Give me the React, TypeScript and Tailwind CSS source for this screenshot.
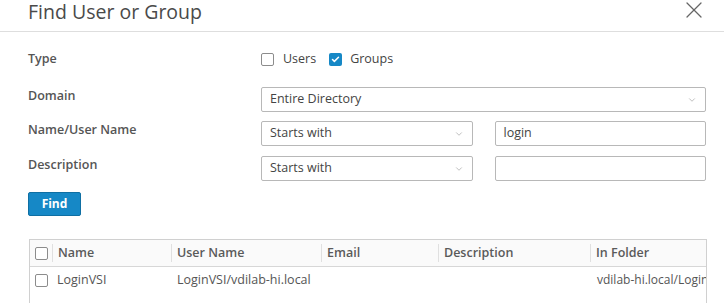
import { X, ChevronDown, Check } from 'lucide-react'

function Box({ checked = false }: { checked?: boolean }) {
  return checked ? (
    <span className="w-[13px] h-[13px] rounded-[2px] bg-[#1688c6] flex items-center justify-center">
      <Check className="w-[9px] h-[9px] text-white" strokeWidth={4} />
    </span>
  ) : (
    <span className="w-[13px] h-[13px] rounded-[2px] border border-[#8c8c8c] bg-white" />
  )
}

function Select({ value }: { value: string }) {
  return (
    <div className="h-[25px] border border-[#b8b8b8] rounded-[2px] flex items-center justify-between pl-[8px] pr-[8px] text-[#444]">
      <span>{value}</span>
      <ChevronDown className="w-[10px] h-[10px] text-[#999]" strokeWidth={1.5} />
    </div>
  )
}

export default function App() {
  const cols = [
    { label: 'Name', w: 'w-[119px]' },
    { label: 'User Name', w: 'w-[150px]' },
    { label: 'Email', w: 'w-[117px]' },
    { label: 'Description', w: 'w-[152px]' },
    { label: 'In Folder', w: 'w-[116px]' },
  ]

  return (
    <div className="w-[724px] h-[303px] bg-white overflow-hidden text-[12.5px] text-[#444]" style={{ fontFamily: '"Open Sans", sans-serif' }}>
      {/* Header */}
      <div className="h-[32px] border-b border-[#dedede] flex items-start justify-between pl-[28px] pr-[16px]">
        <h1 className="text-[19.5px] leading-[23px] text-[#4a4a4a] font-normal">Find User or Group</h1>
        <X className="w-[28px] h-[28px] mt-[-4px] text-[#666]" strokeWidth={1.1} />
      </div>

      <div className="pl-[28px] pr-[18px]">
        {/* Type */}
        <div className="mt-[15px] h-[25px] flex items-center">
          <div className="w-[233px] font-semibold text-[#555]">Type</div>
          <div className="flex items-center">
            <Box />
            <span className="ml-[9px]">Users</span>
            <span className="ml-[13px]"><Box checked /></span>
            <span className="ml-[8px]">Groups</span>
          </div>
        </div>

        {/* Domain */}
        <div className="mt-[15px] flex">
          <div className="w-[233px] leading-[18px] font-semibold text-[#555]">Domain</div>
          <div className="flex-1">
            <Select value="Entire Directory" />
          </div>
        </div>

        {/* Name */}
        <div className="mt-[9px] flex">
          <div className="w-[233px] leading-[18px] font-semibold text-[#555]">Name/User Name</div>
          <div className="flex-1 grid grid-cols-2 gap-[22px]">
            <Select value="Starts with" />
            <div className="h-[25px] border border-[#b8b8b8] rounded-[2px] flex items-center pl-[8px]">login</div>
          </div>
        </div>

        {/* Description */}
        <div className="mt-[10px] flex">
          <div className="w-[233px] leading-[18px] font-semibold text-[#555]">Description</div>
          <div className="flex-1 grid grid-cols-2 gap-[22px]">
            <Select value="Starts with" />
            <div className="h-[25px] border border-[#b8b8b8] rounded-[2px]" />
          </div>
        </div>

        <button className="mt-[11px] w-[53px] h-[24px] bg-[#1688c6] border border-[#0f6fa3] rounded-[2px] text-white font-bold text-[12px]">
          Find
        </button>

        {/* Table */}
        <div className="mt-[23px] ml-[1px] w-[678px] h-[80px] border border-[#d0d0d0] overflow-hidden">
          <div className="h-[27px] bg-[#fafafa] border-b border-[#d7d7d7] flex items-center">
            <div className="w-[24px] flex justify-center">
              <Box />
            </div>
            {cols.map((c) => (
              <div
                key={c.label}
                className={`${c.w} shrink-0 h-[18px] flex items-center px-[5px] font-semibold text-[#5a5a5a] border-l border-[#e0e0e0]`}
              >
                {c.label}
              </div>
            ))}
          </div>
          <div className="h-[26px] flex items-center">
            <div className="w-[24px] flex justify-center">
              <Box />
            </div>
            <div className="w-[119px] shrink-0 px-[5px] text-[#555]">LoginVSI</div>
            <div className="w-[150px] shrink-0 px-[6px] text-[#555]">LoginVSI/vdilab-hi.local</div>
            <div className="w-[117px] shrink-0" />
            <div className="w-[152px] shrink-0" />
            <div className="w-[116px] shrink-0 pl-[7px] text-[12px] text-[#555] whitespace-nowrap overflow-hidden">vdilab-hi.local/LoginVSI</div>
          </div>
        </div>
      </div>
    </div>
  )
}
